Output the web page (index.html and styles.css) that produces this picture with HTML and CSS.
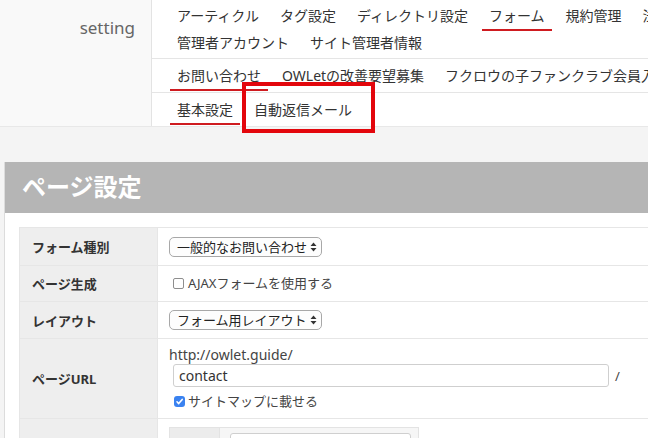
FILE: index.html
```html
<html>
  <head>
    <meta charset="utf-8">
    <title>ページ設定</title>
    <link rel="stylesheet" href="styles.css">
  </head>
  <body>
    <div class="page">
      <header class="site-header">
        <div class="site-name">setting</div>
        <nav class="menus">
          <ul class="menu menu-main">
            <li><a href="#">アーティクル</a></li>
            <li><a href="#">タグ設定</a></li>
            <li><a href="#">ディレクトリ設定</a></li>
            <li class="current"><a href="#">フォーム</a></li>
            <li><a href="#">規約管理</a></li>
            <li><a href="#">法人情報</a></li>
            <li><a href="#">管理者アカウント</a></li>
            <li><a href="#">サイト管理者情報</a></li>
          </ul>
          <ul class="menu menu-sub">
            <li class="current"><a href="#">お問い合わせ</a></li>
            <li><a href="#">OWLetの改善要望募集</a></li>
            <li><a href="#">フクロウの子ファンクラブ会員入会</a></li>
          </ul>
          <ul class="menu menu-tab">
            <li class="current"><a href="#">基本設定</a></li>
            <li><a href="#">自動返信メール</a></li>
          </ul>
        </nav>
      </header>

      <main class="content">
        <section class="panel">
          <h2 class="panel-title">ページ設定</h2>

          <table class="form-table">
            <tr class="row-type">
              <th>フォーム種別</th>
              <td>
                <span class="select">一般的なお問い合わせ
                  <svg class="select-arrows" width="7" height="10" viewBox="0 0 7 10"><path d="M3.5 0.5 L6.5 4 L0.5 4 Z M3.5 9.5 L6.5 6 L0.5 6 Z" fill="#333"/></svg>
                </span>
              </td>
            </tr>
            <tr class="row-gen">
              <th>ページ生成</th>
              <td>
                <label class="check"><span class="box"></span>AJAXフォームを使用する</label>
              </td>
            </tr>
            <tr class="row-layout">
              <th>レイアウト</th>
              <td>
                <span class="select">フォーム用レイアウト
                  <svg class="select-arrows" width="7" height="10" viewBox="0 0 7 10"><path d="M3.5 0.5 L6.5 4 L0.5 4 Z M3.5 9.5 L6.5 6 L0.5 6 Z" fill="#333"/></svg>
                </span>
              </td>
            </tr>
            <tr class="row-url">
              <th>ページURL</th>
              <td>
                <div class="url-base">http://owlet.guide/</div>
                <div class="url-field">
                  <input class="text" type="text" value="contact"> <span class="slash">/</span>
                </div>
                <label class="check check-on">
                  <span class="box">
                    <svg width="11" height="11" viewBox="0 0 11 11"><path d="M3 5.8 L4.7 7.6 L8.2 3.4" fill="none" stroke="#fff" stroke-width="1.6" stroke-linecap="round" stroke-linejoin="round"/></svg>
                  </span>サイトマップに載せる
                </label>
              </td>
            </tr>
            <tr class="row-more">
              <th></th>
              <td>
                <div class="sub-box">
                  <div class="sub-label"></div>
                  <div class="sub-value"><input class="text sub-input" type="text"></div>
                </div>
              </td>
            </tr>
          </table>
        </section>
      </main>

      <!-- annotation -->
      <div class="note-box"></div>
    </div>
  </body>
</html>
```

FILE: styles.css
```css
html {
  overflow: hidden;
}

body {
  margin: 0;
  background-color: #f4f4f4;
  font-family: "Noto Sans", "Noto Sans CJK JP", sans-serif;
  color: #333;
}

.page {
  position: relative;
  width: 800px;
}

/* header */
.site-header {
  display: flex;
  background-color: #fff;
  border-bottom: 1px solid #e8e8e8;
}
.site-name {
  box-sizing: border-box;
  flex: 0 0 152px;
  padding: 15px 16px 0 0;
  text-align: right;
  font-size: 17px;
  line-height: 26px;
  color: #666;
  background-color: #f9f9f9;
  border-right: 1px solid #e3e3e3;
}
.menus {
  flex: 1;
}
.menu {
  display: flex;
  flex-wrap: wrap;
  column-gap: 7px;
  list-style: none;
  margin: 0;
  padding: 5px 0 1px 18px;
  border-bottom: 1px solid #e5e5e5;
}
.menu-main {
  padding-top: 4px;
  padding-bottom: 0;
}
.menu-tab {
  border-bottom: none;
}
.menu a {
  display: block;
  padding: 3px 7px 4px;
  font-size: 14px;
  line-height: 18px;
  color: #333;
  text-decoration: none;
  white-space: nowrap;
  border-bottom: 2px solid transparent;
}
.menu .current a {
  border-bottom-color: #cf1b20;
}

/* content */
.content {
  padding: 35px 0 0 4px;
}
.panel {
  background-color: #fff;
  border-left: 1px solid #dcdcdc;
  padding-bottom: 40px;
}
.panel-title {
  margin: 0;
  height: 51px;
  padding: 0 17px;
  background-color: #b5b5b5;
  color: #fff;
  font-size: 24px;
  font-weight: bold;
  line-height: 49px;
}

.form-table {
  margin: 14px 14px 0;
  width: calc(100% - 28px);
  border-collapse: collapse;
  font-size: 13px;
}
.form-table th,
.form-table td {
  border: 1px solid #e6e6e6;
}
.form-table th {
  width: 113px;
  padding: 0 12px;
  background-color: #eee;
  text-align: left;
  font-weight: bold;
  color: #333;
}
.form-table td {
  padding: 8px 11px;
  color: #444;
}
.row-type td {
  padding-top: 9px;
  padding-bottom: 8px;
}

/* select look-alike */
.select {
  box-sizing: border-box;
  display: inline-flex;
  align-items: center;
  gap: 3px;
  height: 20px;
  padding: 0 4px 0 7px;
  border: 1px solid #a8a8a8;
  border-radius: 5px;
  background-color: #fdfdfd;
  color: #222;
  font-size: 13px;
  line-height: 18px;
  vertical-align: middle;
}
.select-arrows {
  display: block;
}

/* checkboxes */
.check {
  display: flex;
  align-items: center;
  line-height: 19px;
  color: #444;
}
.check .box {
  box-sizing: border-box;
  width: 11px;
  height: 11px;
  margin: 0 4px 0 4px;
  border: 1px solid #8e8e8e;
  border-radius: 2px;
  background-color: #fff;
}
.check-on {
  margin-top: 5px;
}
.check-on .box {
  border: none;
  border-radius: 3px;
  background-color: #3a82f0;
  margin-left: 5px;
  margin-right: 3px;
}
.check-on .box svg {
  display: block;
}

/* url */
.row-url td {
  padding-top: 8px;
  padding-bottom: 7px;
}
.url-base {
  font-size: 14px;
  line-height: 16px;
  color: #444;
}
.url-field {
  display: flex;
  align-items: center;
  gap: 6px;
  margin: 1px 0 0 4px;
}
.text {
  box-sizing: border-box;
  width: 436px;
  height: 23px;
  padding: 0 5px;
  border: 1px solid #cfcfcf;
  border-radius: 3px;
  font-family: "Noto Sans", "Noto Sans CJK JP", sans-serif;
  font-size: 14px;
  color: #333;
}
.slash {
  font-size: 13px;
  color: #444;
}

/* next row */
.sub-box {
  display: flex;
  width: 248px;
  border: 1px solid #e3e3e3;
  background-color: #f6f6f6;
}
.sub-label {
  width: 49px;
  background-color: #ececec;
  border-right: 1px solid #e3e3e3;
}
.sub-value {
  padding: 5px 6px 5px 10px;
}
.sub-input {
  width: 181px;
}

/* red annotation frame */
.note-box {
  position: absolute;
  left: 242px;
  top: 82px;
  box-sizing: border-box;
  width: 133px;
  height: 51px;
  border: 4px solid #e3060c;
}
```
